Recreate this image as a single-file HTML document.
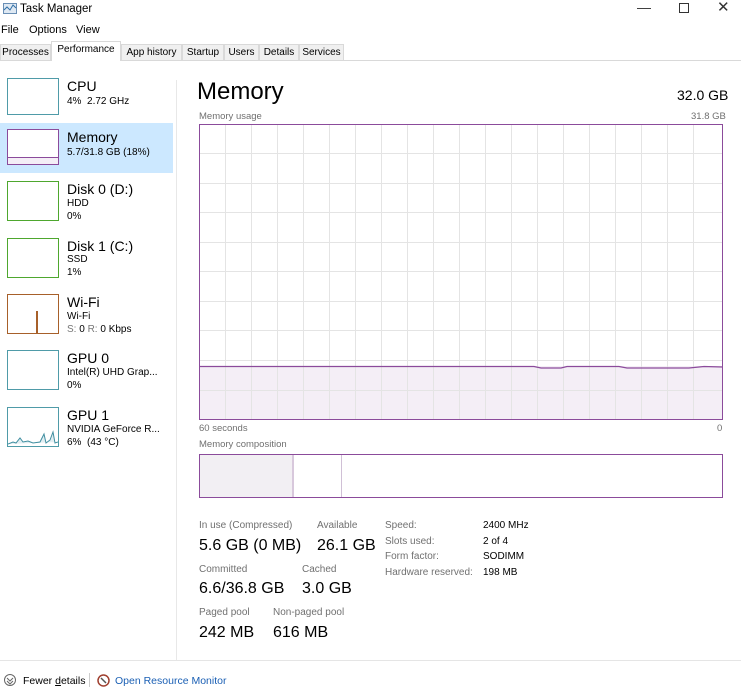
<!DOCTYPE html><html><head><meta charset="utf-8"><style>
*{margin:0;padding:0;box-sizing:border-box}
body{width:741px;height:700px;background:#fff;font-family:"Liberation Sans",sans-serif;color:#000;position:relative;overflow:hidden}
.a{position:absolute;white-space:nowrap}
.tab{position:absolute;top:44px;height:17px;font-size:10px;background:#f0f0f0;border:1px solid #d9d9d9;padding:2px 0 0;text-align:center;white-space:nowrap;overflow:hidden}
.th{position:absolute;left:7px;width:52px;background:#fff}
.t1{font-size:14px}.t2{font-size:10px;line-height:13px}
.lb{font-size:10px;color:#707070}
.big{font-size:16px}
</style></head><body>
<svg class="a" style="left:3px;top:2px" width="14" height="13"><rect x="0.5" y="1.5" width="13" height="10" fill="#dfe9f3" stroke="#6a8fb5"/><polyline points="1,8 4,5 7,8 10,3 13,6" fill="none" stroke="#2e6fa7"/></svg>
<div class="a" style="left:20px;top:3px;font-size:11.5px">Task Manager</div>
<div class="a" style="left:637px;top:-1px;font-size:14px;color:#333">—</div>
<div class="a" style="left:679px;top:3px;width:10px;height:10px;border:1px solid #333"></div>
<div class="a" style="left:717px;top:-2px;font-size:15px;color:#333">✕</div>
<div class="a" style="left:1px;top:24px;font-size:11px">File</div>
<div class="a" style="left:29px;top:24px;font-size:11px">Options</div>
<div class="a" style="left:76px;top:24px;font-size:11px">View</div>
<div class="a" style="left:0;top:60px;width:741px;height:1px;background:#d9d9d9"></div>
<div class="tab" style="left:0;width:51px">Processes</div>
<div class="tab" style="left:51px;top:41px;height:20px;width:70px;background:#fff;border-bottom:none">Performance</div>
<div class="tab" style="left:121px;width:61px">App history</div>
<div class="tab" style="left:182px;width:42px">Startup</div>
<div class="tab" style="left:224px;width:35px">Users</div>
<div class="tab" style="left:259px;width:40px">Details</div>
<div class="tab" style="left:299px;width:45px">Services</div>
<div class="a" style="left:0;top:123px;width:173px;height:50px;background:#cce8ff"></div>
<div class="a" style="left:176px;top:80px;width:1px;height:580px;background:#e8e8e8"></div>
<div class="th" style="top:78px;height:37px;border:1px solid #4f9ba8"></div>
<div class="a t1" style="left:67px;top:78px">CPU</div><div class="a t2" style="left:67px;top:95px">4%&nbsp; 2.72 GHz</div>
<div class="th" style="top:129px;height:36px;border:1px solid #8b4b9b"><div class="a" style="left:0;right:0;bottom:0;height:7px;background:#f4eef6;border-top:1px solid #8b4b9b"></div></div>
<div class="a t1" style="left:67px;top:129px">Memory</div><div class="a t2" style="left:67px;top:146px">5.7/31.8 GB (18%)</div>
<div class="th" style="top:181px;height:40px;border:1px solid #4ea72e"></div>
<div class="a t1" style="left:67px;top:181px">Disk 0 (D:)</div><div class="a t2" style="left:67px;top:197px">HDD</div><div class="a t2" style="left:67px;top:210px">0%</div>
<div class="th" style="top:238px;height:40px;border:1px solid #4ea72e"></div>
<div class="a t1" style="left:67px;top:238px">Disk 1 (C:)</div><div class="a t2" style="left:67px;top:253px">SSD</div><div class="a t2" style="left:67px;top:266px">1%</div>
<div class="th" style="top:294px;height:40px;border:1px solid #a7602a"><div class="a" style="left:28px;bottom:0;width:2px;height:22px;background:#a7602a"></div></div>
<div class="a t1" style="left:67px;top:294px">Wi-Fi</div><div class="a t2" style="left:67px;top:310px">Wi-Fi</div><div class="a t2" style="left:67px;top:323px"><span style="color:#777">S:</span> 0 <span style="color:#777">R:</span> 0 Kbps</div>
<div class="th" style="top:350px;height:40px;border:1px solid #4f9ba8"></div>
<div class="a t1" style="left:67px;top:350px">GPU 0</div><div class="a t2" style="left:67px;top:366px">Intel(R) UHD Grap...</div><div class="a t2" style="left:67px;top:379px">0%</div>
<div class="th" style="top:407px;height:40px;border:1px solid #4f9ba8"><svg class="a" style="left:0;top:0" width="50" height="38"><polyline points="0,36 5,34 8,35 12,30 15,34 20,33 25,35 32,34 36,26 38,35 42,32 45,24 47,35 50,34" fill="#e1eef2" stroke="#3f8ea0"/></svg></div>
<div class="a t1" style="left:67px;top:407px">GPU 1</div><div class="a t2" style="left:67px;top:423px">NVIDIA GeForce R...</div><div class="a t2" style="left:67px;top:436px">6%&nbsp; (43 °C)</div>
<div class="a" style="left:197px;top:78px;font-size:24px">Memory</div>
<div class="a" style="left:677px;top:87px;font-size:14px">32.0 GB</div>
<div class="a lb" style="left:199px;top:111px;font-size:9.5px">Memory usage</div>
<div class="a lb" style="left:691px;top:111px;font-size:9.5px">31.8 GB</div>
<svg class="a" style="left:199px;top:124px" width="524" height="296">
<rect x="0" y="242" width="524" height="54" fill="#f4eef6"/>
<g stroke="#e4e4e4" stroke-width="1">
<line x1="26.5" y1="0" x2="26.5" y2="296"/><line x1="52.5" y1="0" x2="52.5" y2="296"/><line x1="78.5" y1="0" x2="78.5" y2="296"/><line x1="104.5" y1="0" x2="104.5" y2="296"/><line x1="130.5" y1="0" x2="130.5" y2="296"/><line x1="156.5" y1="0" x2="156.5" y2="296"/><line x1="182.5" y1="0" x2="182.5" y2="296"/><line x1="208.5" y1="0" x2="208.5" y2="296"/><line x1="234.5" y1="0" x2="234.5" y2="296"/><line x1="260.5" y1="0" x2="260.5" y2="296"/><line x1="286.5" y1="0" x2="286.5" y2="296"/><line x1="312.5" y1="0" x2="312.5" y2="296"/><line x1="338.5" y1="0" x2="338.5" y2="296"/><line x1="364.5" y1="0" x2="364.5" y2="296"/><line x1="390.5" y1="0" x2="390.5" y2="296"/><line x1="416.5" y1="0" x2="416.5" y2="296"/><line x1="442.5" y1="0" x2="442.5" y2="296"/><line x1="468.5" y1="0" x2="468.5" y2="296"/><line x1="494.5" y1="0" x2="494.5" y2="296"/>
<line x1="0" y1="29.5" x2="524" y2="29.5"/><line x1="0" y1="59.5" x2="524" y2="59.5"/><line x1="0" y1="88.5" x2="524" y2="88.5"/><line x1="0" y1="118.5" x2="524" y2="118.5"/><line x1="0" y1="147.5" x2="524" y2="147.5"/><line x1="0" y1="177.5" x2="524" y2="177.5"/><line x1="0" y1="206.5" x2="524" y2="206.5"/><line x1="0" y1="236.5" x2="524" y2="236.5"/><line x1="0" y1="266.5" x2="524" y2="266.5"/>
</g>
<polyline points="0,242.5 335,242.5 342,244 362,244 368,242.5 420,242.5 428,244 490,244 505,242.5 524,243" fill="none" stroke="#8b4b9b" stroke-width="1.2"/>
<rect x="0.5" y="0.5" width="523" height="295" fill="none" stroke="#8b4b9b"/>
</svg>
<div class="a lb" style="left:199px;top:423px;font-size:9.5px">60 seconds</div>
<div class="a lb" style="left:717px;top:423px;font-size:9.5px">0</div>
<div class="a lb" style="left:199px;top:439px;font-size:9.5px">Memory composition</div>
<div class="a" style="left:199px;top:454px;width:524px;height:44px;border:1px solid #8b4b9b"><div class="a" style="left:0;top:0;width:94px;height:42px;background:#f2eff3;border-right:2px solid #d8c8dc"></div><div class="a" style="left:141px;top:0;width:1px;height:42px;background:#d0c0d6"></div></div>
<div class="a lb" style="left:199px;top:520px">In use (Compressed)</div>
<div class="a lb" style="left:317px;top:520px">Available</div>
<div class="a big" style="left:199px;top:537px">5.6 GB (0 MB)</div>
<div class="a big" style="left:317px;top:537px">26.1 GB</div>
<div class="a lb" style="left:199px;top:564px">Committed</div>
<div class="a lb" style="left:302px;top:564px">Cached</div>
<div class="a big" style="left:199px;top:580px">6.6/36.8 GB</div>
<div class="a big" style="left:302px;top:580px">3.0 GB</div>
<div class="a lb" style="left:199px;top:607px">Paged pool</div>
<div class="a lb" style="left:273px;top:607px">Non-paged pool</div>
<div class="a big" style="left:199px;top:624px">242 MB</div>
<div class="a big" style="left:273px;top:624px">616 MB</div>
<div class="a lb" style="left:385px;top:520px">Speed:</div><div class="a" style="left:483px;top:520px;font-size:10px">2400 MHz</div>
<div class="a lb" style="left:385px;top:536px">Slots used:</div><div class="a" style="left:483px;top:536px;font-size:10px">2 of 4</div>
<div class="a lb" style="left:385px;top:551px">Form factor:</div><div class="a" style="left:483px;top:551px;font-size:10px">SODIMM</div>
<div class="a lb" style="left:385px;top:567px">Hardware reserved:</div><div class="a" style="left:483px;top:567px;font-size:10px">198 MB</div>
<div class="a" style="left:0;top:660px;width:741px;height:1px;background:#e5e5e5"></div>
<svg class="a" style="left:4px;top:674px" width="12" height="12"><circle cx="6" cy="6" r="5.5" fill="none" stroke="#666"/><polyline points="3,4 6,7 9,4" fill="none" stroke="#666"/><polyline points="3,7 6,10 9,7" fill="none" stroke="#666"/></svg>
<div class="a" style="left:23px;top:675px;font-size:10.5px">Fewer <u>d</u>etails</div>
<div class="a" style="left:89px;top:673px;width:1px;height:14px;background:#ccc"></div>
<svg class="a" style="left:97px;top:674px" width="13" height="13"><circle cx="6.5" cy="6.5" r="5.5" fill="none" stroke="#a04030" stroke-width="1.5"/><line x1="4" y1="4" x2="9" y2="9" stroke="#555" stroke-width="1.5"/></svg>
<div class="a" style="left:115px;top:675px;font-size:10.5px;color:#1a5fb4">Open Resource Monitor</div>
</body></html>
